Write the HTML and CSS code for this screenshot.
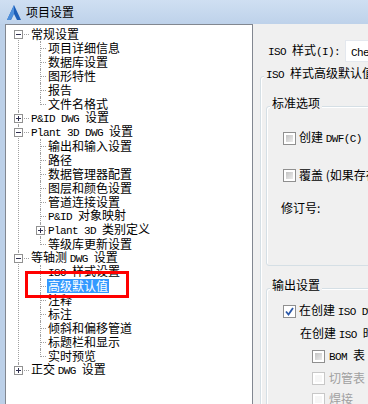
FILE: index.html
```html
<!DOCTYPE html>
<html lang="zh-CN">
<head>
    <meta charset="UTF-8">
    <title>项目设置</title>
    <link rel="stylesheet" href="styles.css">
</head>
<body>

<div class="window">
    <!-- Title bar -->
    <div class="titlebar">
        <svg class="app-icon" width="14" height="15" viewBox="0 0 14 15">
            <polygon points="7,0 14,15 0,15" fill="#1d5fb8"/>
            <polygon points="7,0 7,9 3.5,15 0,15" fill="#4d8fdc"/>
            <polygon points="7,9 10,15 4,15" fill="#c9dbf0"/>
        </svg>
        <span class="title">项目设置</span>
    </div>

    <div class="main">
        <!-- Settings tree -->
        <div class="tree-panel">
            <ul class="tree">
                <li>
                    <div class="row"><span class="exp"></span><span class="label">常规设置</span></div>
                    <ul class="sub">
                        <li><div class="row"><span class="label">项目详细信息</span></div></li>
                        <li><div class="row"><span class="label">数据库设置</span></div></li>
                        <li><div class="row"><span class="label">图形特性</span></div></li>
                        <li><div class="row"><span class="label">报告</span></div></li>
                        <li><div class="row"><span class="label">文件名格式</span></div></li>
                    </ul>
                </li>
                <li>
                    <div class="row"><span class="exp closed"></span><span class="label"><span class="en">P&amp;ID DWG </span>设置</span></div>
                </li>
                <li>
                    <div class="row"><span class="exp"></span><span class="label"><span class="en">Plant 3D DWG </span>设置</span></div>
                    <ul class="sub">
                        <li><div class="row"><span class="label">输出和输入设置</span></div></li>
                        <li><div class="row"><span class="label">路径</span></div></li>
                        <li><div class="row"><span class="label">数据管理器配置</span></div></li>
                        <li><div class="row"><span class="label">图层和颜色设置</span></div></li>
                        <li><div class="row"><span class="label">管道连接设置</span></div></li>
                        <li><div class="row"><span class="label"><span class="en">P&amp;ID </span>对象映射</span></div></li>
                        <li><div class="row"><span class="exp closed"></span><span class="label"><span class="en">Plant 3D </span>类别定义</span></div></li>
                        <li><div class="row"><span class="label">等级库更新设置</span></div></li>
                    </ul>
                </li>
                <li>
                    <div class="row"><span class="exp"></span><span class="label">等轴测 <span class="en">DWG </span>设置</span></div>
                    <ul class="sub">
                        <li><div class="row"><span class="label"><span class="en">ISO </span>样式设置</span></div></li>
                        <li><div class="row"><span class="label selected">高级默认值</span></div></li>
                        <li><div class="row"><span class="label">注释</span></div></li>
                        <li><div class="row"><span class="label">标注</span></div></li>
                        <li><div class="row"><span class="label">倾斜和偏移管道</span></div></li>
                        <li><div class="row"><span class="label">标题栏和显示</span></div></li>
                        <li><div class="row"><span class="label">实时预览</span></div></li>
                    </ul>
                </li>
                <li>
                    <div class="row"><span class="exp closed"></span><span class="label">正交 <span class="en">DWG </span>设置</span></div>
                </li>
            </ul>
            <!-- red annotation frame -->
            <div class="callout"></div>
        </div>

        <!-- Settings page -->
        <div class="settings">
            <div class="iso-row">
                <span class="field-label"><span class="en">ISO </span>样式<span class="en">(I):</span></span>
                <div class="combo"><span class="en">Chemical</span></div>
            </div>

            <div class="group outer">
                <div class="group-title"><span class="en">ISO </span>样式高级默认值</div>

                <div class="group std">
                    <div class="group-title">标准选项</div>
                    <div class="check-row r1"><span class="cb"></span><span>创建 <span class="en">DWF(C)</span></span></div>
                    <div class="check-row r2"><span class="cb"></span><span>覆盖 (如果存在)</span></div>
                    <div class="text-row r3">修订号:</div>
                </div>

                <div class="group output">
                    <div class="group-title">输出设置</div>
                    <div class="check-row o1"><span class="cb checked"><svg width="9" height="9" viewBox="0 0 9 9"><path d="M1 4.5 L3.5 7.5 L8 1" fill="none" stroke="#2b58a8" stroke-width="1.8"/></svg></span><span>在创建 <span class="en">ISO DWG </span>时</span></div>
                    <div class="text-row o2">在创建 <span class="en">ISO </span>时输出:</div>
                    <div class="check-row o3"><span class="cb"></span><span><span class="en">BOM </span>表</span></div>
                    <div class="check-row o4 disabled"><span class="cb"></span><span>切管表</span></div>
                    <div class="check-row o5 disabled"><span class="cb"></span><span>焊接</span></div>
                </div>
            </div>
        </div>
    </div>
</div>

</body>
</html>
```

FILE: styles.css
```css
* {
    margin: 0;
    padding: 0;
    box-sizing: border-box;
}

body {
    font-family: "Noto Sans CJK SC", sans-serif;
    font-size: 12px;
    color: #000;
    background-color: #bcd0e8;
}

.window {
    width: 368px;
    height: 404px;
    overflow: hidden;
    background-color: #bcd0e8;
}

/* Title bar */
.titlebar {
    height: 24px;
    display: flex;
    align-items: center;
    gap: 5px;
    padding-left: 7px;
    background: linear-gradient(#cfdff2, #bed2ea);
}

.app-icon {
    display: block;
    margin-top: 1px;
}

.title {
    line-height: 14px;
}

.en {
    font-family: "Liberation Mono", monospace;
    font-size: 11px;
    letter-spacing: -0.6px;
}

.main {
    display: flex;
    height: 380px;
    padding-left: 5px;
}

/* Tree */
.tree-panel {
    position: relative;
    width: 248px;
    height: 390px;
    background-color: #fff;
    border: 1px solid #828790;
}

.tree,
.sub {
    list-style: none;
}

.tree {
    padding-top: 2px;
}

.tree li {
    position: relative;
}

.tree > li {
    padding-left: 24px;
}

.sub > li {
    padding-left: 17px;
}

/* vertical dotted lines */
.tree li::before {
    content: "";
    position: absolute;
    top: 0;
    bottom: 0;
    border-left: 1px dotted #a0a0a0;
}

.tree > li::before {
    left: 12px;
}

.sub > li::before {
    left: 10px;
}

.tree > li:first-child::before {
    top: 7px;
}

.tree li:last-child::before {
    bottom: auto;
    height: 8px;
}

/* horizontal dotted lines */
.tree li::after {
    content: "";
    position: absolute;
    top: 7px;
    border-top: 1px dotted #a0a0a0;
}

.tree > li::after {
    left: 12px;
    width: 11px;
}

.sub > li::after {
    left: 10px;
    width: 6px;
}

.row {
    display: flex;
    align-items: center;
    height: 14px;
    white-space: nowrap;
}

.label {
    line-height: 14px;
    padding: 0 1px;
}

.label.selected {
    background-color: #3399ff;
    color: #fff;
}

.exp {
    position: absolute;
    top: 3px;
    left: 8px;
    width: 9px;
    height: 9px;
    border: 1px solid #919191;
    background-color: #fff;
    z-index: 1;
}

.sub .exp {
    left: 6px;
}

.exp::before {
    content: "";
    position: absolute;
    left: 1px;
    top: 3px;
    width: 5px;
    height: 1px;
    background-color: #2f2f4f;
}

.exp.closed::after {
    content: "";
    position: absolute;
    left: 3px;
    top: 1px;
    width: 1px;
    height: 5px;
    background-color: #2f2f4f;
}

.callout {
    position: absolute;
    left: 19px;
    top: 246px;
    width: 104px;
    height: 27px;
    border: 3px solid #ff0000;
    z-index: 2;
}

/* Settings page */
.settings {
    flex: 1;
    background-color: #f0f0f0;
    padding-top: 16px;
    overflow: hidden;
    white-space: nowrap;
}

.iso-row {
    display: flex;
    align-items: center;
    height: 22px;
    padding-left: 15px;
}

.field-label {
    flex: none;
    width: 77px;
    line-height: 14px;
}

.combo {
    flex: none;
    width: 160px;
    height: 22px;
    line-height: 20px;
    padding-left: 5px;
    background-color: #fff;
    border: 1px solid #e4e8ee;
    border-right: none;
}

.group {
    border: 1px solid #d5dfe5;
    border-radius: 3px;
    box-shadow: inset 1px 1px 0 #fff;
}

.group-title {
    width: fit-content;
    margin: -11px 0 0 3px;
    padding: 0 2px;
    line-height: 14px;
    background-color: #f0f0f0;
}

.outer {
    width: 220px;
    height: 400px;
    margin: 14px 0 0 7px;
}

.std,
.output {
    width: 200px;
    margin-left: 5px;
}

.std {
    margin-top: 24px;
    padding-bottom: 50px;
}

.output {
    margin-top: 22px;
    height: 200px;
}

.check-row {
    display: flex;
    align-items: center;
    gap: 3px;
    height: 14px;
    line-height: 14px;
    padding-left: 16px;
}

.text-row {
    height: 14px;
    line-height: 14px;
}

.r1 { margin-top: 21px; }
.r2 { margin-top: 23px; }
.r3 { margin-top: 19px; padding-left: 14px; }

.o1 { margin-top: 12px; }
.o2 { margin-top: 8px; padding-left: 33px; }
.o3 { margin-top: 9px; padding-left: 45px; gap: 4px; }
.o4 { margin-top: 8px; padding-left: 45px; gap: 4px; }
.o5 { margin-top: 7px; padding-left: 45px; gap: 4px; }

/* Checkboxes */
.cb {
    position: relative;
    flex: none;
    width: 13px;
    height: 13px;
    border: 1px solid #8f8f8f;
    background-color: #fff;
    padding: 2px;
}

.cb::before {
    content: "";
    display: block;
    width: 100%;
    height: 100%;
    background: linear-gradient(135deg, #c2c2c2, #ececec);
}

.cb.checked {
    padding: 1px;
}

.cb.checked::before {
    display: none;
}

.cb svg {
    display: block;
}

.disabled {
    color: #a0a0a0;
}

.disabled .cb {
    border-color: #c8c8c8;
}

.disabled .cb::before {
    background: #f6f6f6;
}
```
